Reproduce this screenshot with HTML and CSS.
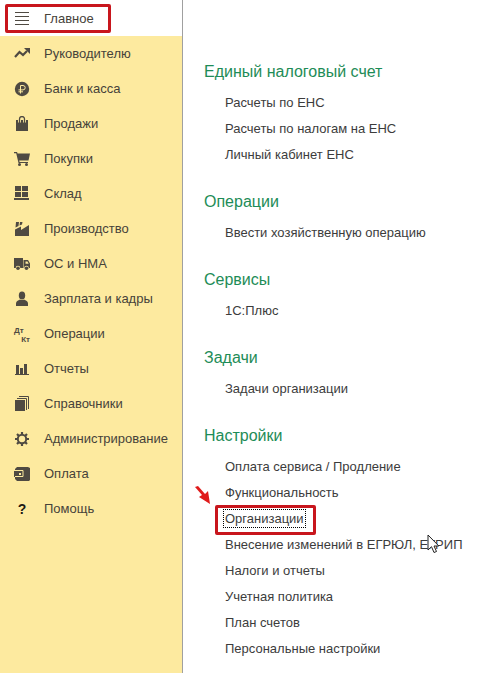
FILE: index.html
```html
<!DOCTYPE html>
<html lang="ru">
<head>
    <meta charset="UTF-8">
    <meta name="viewport" content="width=device-width, initial-scale=1.0">
    <title>Главное</title>
    <link rel="stylesheet" href="styles.css">
</head>
<body>
    <div class="app">
        <nav class="sidebar">
            <a class="item active" href="#">
                <svg class="icon" viewBox="0 0 16 16"><path d="M1 2.500h14M1 6.500h14M1 10.500h14M1 14.500h14" fill="none" stroke="currentColor"/></svg>
                <span>Главное</span>
            </a>
            <a class="item" href="#">
                <svg class="icon" viewBox="0 0 16 16"><path d="M1 11l4.500-5 3.500 3L13 5" fill="none" stroke="currentColor" stroke-width="2.200"/><path d="M10 2h6v6z"/></svg>
                <span>Руководителю</span>
            </a>
            <a class="item" href="#">
                <svg class="icon" viewBox="0 0 16 16"><circle cx="8" cy="8" r="7.200"/><path d="M6.500 12.500V4.500h2.500a2.200 2.200 0 0 1 0 4.400H4.500M4.500 10.800h4.500" fill="none" class="cut"/></svg>
                <span>Банк и касса</span>
            </a>
            <a class="item" href="#">
                <svg class="icon" viewBox="0 0 16 16"><path d="M2 4h12v11H2z"/><path d="M4.500 4v2.500M6.500 4v2.500M9.500 4v2.500M11.500 4v2.500" fill="none" class="cut"/><path d="M5.500 6.500V3a2.500 2.500 0 0 1 5 0v3.500" fill="none" stroke="currentColor" stroke-width="1.300"/></svg>
                <span>Продажи</span>
            </a>
            <a class="item" href="#">
                <svg class="icon" viewBox="0 0 16 16"><path d="M0 1h3l.6 1.500H16l-1.500 7H5.200l.4 1.500H14v1H4.500L2.200 2.200H0z"/><circle cx="5.500" cy="13.500" r="1.500"/><circle cx="12.500" cy="13.500" r="1.500"/></svg>
                <span>Покупки</span>
            </a>
            <a class="item" href="#">
                <svg class="icon" viewBox="0 0 16 16"><path d="M1 0h6v5H1zM8 0h6v5H8zM1 6h6v5H1zM8 6h6v5H8zM0 12h15v2H0z"/></svg>
                <span>Склад</span>
            </a>
            <a class="item" href="#">
                <svg class="icon" viewBox="0 0 16 16"><path d="M1 15V8.500l6-3V9l8-5v11zM2 1h3L4.500 5 1.500 6.500zM6 1h2.500L8 3.500 5.500 4.500z"/></svg>
                <span>Производство</span>
            </a>
            <a class="item" href="#">
                <svg class="icon" viewBox="0 0 16 16"><path d="M0 2h9v10H0zM9.500 4H14L16 7.500V12H9.500z"/><path d="M11.500 5.500h2l1.200 2.300h-3.200z" class="hole"/><circle cx="4" cy="12" r="2.300" class="hole"/><circle cx="12.500" cy="12" r="2.300" class="hole"/><circle cx="4" cy="12.200" r="1.800"/><circle cx="12.500" cy="12.200" r="1.800"/></svg>
                <span>ОС и НМА</span>
            </a>
            <a class="item" href="#">
                <svg class="icon" viewBox="0 0 16 16"><ellipse cx="8" cy="4.500" rx="3.200" ry="4"/><path d="M2 15v-2.500C2 10 4 9.500 6 8.500c1.200.8 2.800.8 4 0 2 1 4 1.500 4 4V15z"/></svg>
                <span>Зарплата и кадры</span>
            </a>
            <a class="item" href="#">
                <span class="icon dtkt"><b>Дт</b><b class="kt">Кт</b></span>
                <span>Операции</span>
            </a>
            <a class="item" href="#">
                <svg class="icon" viewBox="0 0 16 16"><path d="M1 13h14v1H1zM2 4h3v9H2zM6 7h3v6H6zM10 3h3v10h-3z"/></svg>
                <span>Отчеты</span>
            </a>
            <a class="item" href="#">
                <svg class="icon" viewBox="0 0 16 16"><path d="M1 4h10v11H1z"/><path d="M3 2.500h9.500V14M5 .5h9.500V13" fill="none" stroke="currentColor"/></svg>
                <span>Справочники</span>
            </a>
            <a class="item" href="#">
                <svg class="icon" viewBox="0 0 16 16"><circle cx="8" cy="8" r="4.200" fill="none" stroke="currentColor" stroke-width="2"/><path d="M8 1v3M8 12v3M1 8h3M12 8h3M3 3l2.200 2.200M10.800 10.800L13 13M3 13l2.200-2.200M10.800 5.200L13 3" fill="none" stroke="currentColor" stroke-width="2.200"/></svg>
                <span>Администрирование</span>
            </a>
            <a class="item" href="#">
                <svg class="icon" viewBox="0 0 16 16"><path d="M3 1h11l2 1v12l-1 1H3l-2-2v-2H0V5h1V3z"/><path d="M1 4.500h8v6H1" fill="none" class="cut"/><path d="M5 7h2v2H5z" class="hole"/></svg>
                <span>Оплата</span>
            </a>
            <a class="item" href="#">
                <b class="icon help">?</b>
                <span>Помощь</span>
            </a>
        </nav>

        <main class="content">
            <section>
                <h2>Единый налоговый счет</h2>
                <ul>
                    <li><a href="#">Расчеты по ЕНС</a></li>
                    <li><a href="#">Расчеты по налогам на ЕНС</a></li>
                    <li><a href="#">Личный кабинет ЕНС</a></li>
                </ul>
            </section>
            <section>
                <h2>Операции</h2>
                <ul>
                    <li><a href="#">Ввести хозяйственную операцию</a></li>
                </ul>
            </section>
            <section>
                <h2>Сервисы</h2>
                <ul>
                    <li><a href="#">1С:Плюс</a></li>
                </ul>
            </section>
            <section>
                <h2>Задачи</h2>
                <ul>
                    <li><a href="#">Задачи организации</a></li>
                </ul>
            </section>
            <section>
                <h2>Настройки</h2>
                <ul>
                    <li><a href="#">Оплата сервиса / Продление</a></li>
                    <li><a href="#">Функциональность</a></li>
                    <li>
                        <a class="focused" href="#">Организации</a>
                        <svg class="arrow" viewBox="0 0 18 20"><path d="M1 2l3-1 7 8 3-3 2 13-11-7 3-2z"/></svg>
                    </li>
                    <li>
                        <a href="#">Внесение изменений в ЕГРЮЛ, ЕГРИП
                            <svg class="cursor" viewBox="0 0 13 20"><path d="M1 1v15l3.500-3.300L7 18.500l2.500-1L7 12h4.800z"/></svg>
                        </a>
                    </li>
                    <li><a href="#">Налоги и отчеты</a></li>
                    <li><a href="#">Учетная политика</a></li>
                    <li><a href="#">План счетов</a></li>
                    <li><a href="#">Персональные настройки</a></li>
                </ul>
            </section>
        </main>
    </div>
</body>
</html>
```
FILE: styles.css
```css
body {
    margin: 0;
    background: #fff;
    color: #3c3c3c;
    font-family: "Liberation Sans", Arial, sans-serif;
    font-size: 13px;
}
a {
    color: inherit;
    text-decoration: none;
}
.app {
    display: flex;
    min-height: 100vh;
}

/* left menu */
.sidebar {
    flex: none;
    width: 182px;
    background: #fdea9f;
    border-right: 1px solid #a0a0a0;
    color: #46423a;
}
.item {
    display: flex;
    align-items: center;
    gap: 14px;
    height: 35px;
    padding-left: 14px;
    white-space: nowrap;
}
.active {
    position: relative;
    height: 36px;
    background: #fff;
}
.active::after,
.focused::after {
    content: "";
    position: absolute;
    border: 3px solid #c8161d;
    border-radius: 2px;
}
.active::after {
    top: 4px;
    left: 5px;
    width: 100px;
    height: 23px;
}
.icon {
    flex: none;
    width: 16px;
    height: 16px;
    fill: #4f4a42;
    color: #4f4a42;
}
.cut {
    stroke: #fdea9f;
}
.hole {
    fill: #fdea9f;
}
.dtkt {
    display: flex;
    flex-direction: column;
    font-size: 8px;
    line-height: 9px;
}
.kt {
    align-self: flex-end;
}
.help {
    font-size: 14px;
    line-height: 16px;
    text-align: center;
    color: #1e1a14;
}

/* right part */
.content {
    flex: 1;
    display: flex;
    flex-direction: column;
    gap: 22px;
    padding: 59px 0 10px 21px;
    white-space: nowrap;
}
h2 {
    margin: 0 0 4px;
    font-size: 16px;
    font-weight: normal;
    line-height: 26px;
    color: #1e8c57;
}
ul {
    margin: 0;
    padding: 0 0 0 19px;
    list-style: none;
}
li {
    position: relative;
    display: flex;
    align-items: center;
    height: 26px;
}
li a {
    position: relative;
    padding: 1px;
    border: 1px solid transparent;
}
.focused {
    border: 1px dotted #000;
}
.focused::after {
    top: -5px;
    left: -9px;
    right: -11px;
    bottom: -8px;
}
.arrow {
    position: absolute;
    top: -20px;
    left: -29px;
    width: 18px;
    height: 20px;
    fill: #e01b1b;
}
.cursor {
    position: absolute;
    top: -2px;
    right: 23px;
    width: 13px;
    height: 20px;
    fill: #fff;
    stroke: #222;
}
```
